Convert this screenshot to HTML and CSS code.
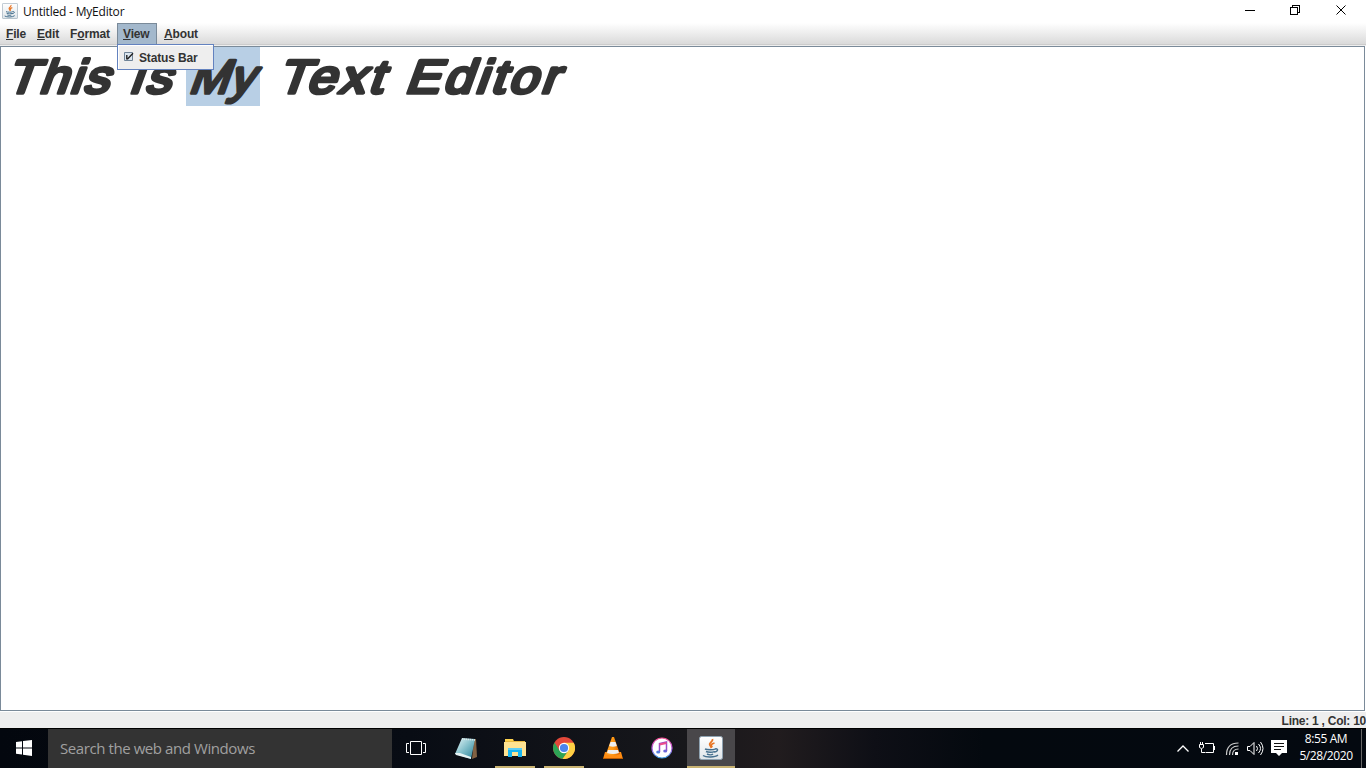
FILE: index.html
```html
<!DOCTYPE html>
<html lang="en">
<head>
<meta charset="utf-8">
<title>Untitled - MyEditor</title>
<link rel="stylesheet" href="styles.css">
</head>
<body>
<svg class="defs" aria-hidden="true">
  <defs>
    <linearGradient id="tile" x2="0" y2="1"><stop stop-color="#fff"/><stop offset="1" stop-color="#dfe5e9"/></linearGradient>
    <linearGradient id="note" x2="1" y2="1"><stop stop-color="#e9f8fa"/><stop offset=".5" stop-color="#82bfca"/><stop offset="1" stop-color="#267f96"/></linearGradient>
    <linearGradient id="ring" x2="0" y2="1"><stop stop-color="#f44f93"/><stop offset=".5" stop-color="#b95ce0"/><stop offset="1" stop-color="#41a7ee"/></linearGradient>
    <linearGradient id="cone" x2="1"><stop stop-color="#ffa22d"/><stop offset=".5" stop-color="#ff9914"/><stop offset="1" stop-color="#d76000"/></linearGradient>
    <symbol id="java" viewBox="0 0 24 24">
      <rect x=".5" y=".5" width="23" height="23" rx="2" fill="url(#tile)" stroke="#8fa3b2"/>
      <path d="M13.500 3c1 3-5 4-2 7l1 2M15.500 7c-4 1-4 3-2 4" fill="none" stroke="#e87524" stroke-width="1.800"/>
      <path d="M6 13c2 1 9 1 10 0M7 15.500c2 1 7 1 8 0M8 18c2 1 5 1 6 0M16 13c4-1 3 3-1 3M4 19.500c3 2 12 2 15-.5" fill="none" stroke="#46708e" stroke-width="1.500"/>
    </symbol>
  </defs>
</svg>
<div class="desktop">
  <header class="titlebar">
    <svg class="app-icon"><use href="#java"/></svg>
    <span class="title">Untitled - MyEditor</span>
    <svg class="window-buttons" width="110" height="22" viewBox="0 0 110 22" fill="none" stroke="#000" shape-rendering="crispEdges">
      <path d="M4 10.500h10M49.500 7.500h7v7h-7zM51.500 7v-1.500h7v7h-2"/>
      <path d="M95.500 5.500l9 9M104.500 5.500l-9 9" shape-rendering="auto"/>
    </svg>
  </header>
  <nav class="menubar">
    <span class="menu file"><u>F</u>ile</span>
    <span class="menu edit"><u>E</u>dit</span>
    <span class="menu format">F<u>o</u>rmat</span>
    <span class="menu view"><u>V</u>iew
      <span class="popup">
        <svg width="10" height="10" viewBox="0 0 10 10"><path d="M.5.500h8v8h-8z" fill="#dbe6ef" stroke="#6f8397"/><path d="M2.800 3v4.500M3.300 7.200L9 1.200" fill="none" stroke="#222" stroke-width="1.400"/></svg>
        <span>Status Bar</span>
      </span>
    </span>
    <span class="menu about"><u>A</u>bout</span>
  </nav>
  <main class="editor">
    <svg class="document" width="600" height="60" viewBox="0 47 600 60">
      <rect x="186" y="47" width="74" height="59" fill="#b8cfe5"/>
      <g class="words">
        <text transform="translate(5 93.300) skewX(-20) scale(1.080 1)" textLength="95">This</text>
        <text transform="translate(129 93.300) skewX(-20) scale(1.080 1)" textLength="37.500">is</text>
        <text transform="translate(188 93.300) skewX(-20) scale(1 1)" textLength="64">My</text>
        <text transform="translate(276 93.300) skewX(-20) scale(1.100 1)" textLength="96">Text</text>
        <text transform="translate(404 93.300) skewX(-20) scale(1.100 1)" textLength="139">Editor</text>
      </g>
    </svg>
  </main>
  <div class="statusbar">Line: 1 , Col: 10</div>
  <footer class="taskbar">
    <span class="start"><svg width="16" height="16" viewBox="0 0 16 16" fill="#fff"><path d="M0 2l6-.8v6.300H0zM7 1l9-1v7.500H7zM0 8.500h6v6L0 13.700zM7 8.500h9V16l-9-1.200z"/></svg></span>
    <span class="search">Search the web and Windows</span>
    <span class="task taskview"><svg width="20" height="15" viewBox="0 0 20 15" fill="none" stroke="#fff"><path d="M4.500.500h11v13h-11zM3 2.500H.500v9H3M17 2.500h2.500v9H17"/></svg></span>
    <span class="task"><svg width="24" height="24" viewBox="0 0 24 24"><path d="M20 3l2 0 1 18-5 2z" fill="#806143"/><path d="M8 2l13 1-4 20L1 18z" fill="url(#note)"/><path d="M1 17l5 0 11 4 0 2L2 19z" fill="#e5f2f3"/><path d="M8 3l13 1" stroke="#dce7e8" stroke-width="1.500" stroke-dasharray="1.200 .8"/></svg></span>
    <span class="task open"><svg width="22" height="22" viewBox="0 0 22 22"><path d="M1 2h8l1 2h11v15H1z" fill="#e8b83e"/><path d="M0 5h22v14H0z" fill="#ffe391"/><path d="M1 2h8v2H1z" fill="#ffd34e"/><path d="M4 11h14v9h-4v-5H8v5H4z" fill="#18b5ef"/><path d="M4 11h14v2H4z" fill="#5ccdf4"/></svg></span>
    <span class="task open"><svg width="22" height="22" viewBox="-11 -11 22 22"><circle r="11" fill="#e3483a"/><path d="M-9.500-5.500A11 11 0 0 0-1.500 10.900L4.500 2.500-4.500 2.500z" fill="#2da455"/><path d="M0-5.200h9.700A11 11 0 0 1-1.500 10.900L4.500 2.600z" fill="#ffd044"/><circle r="5.200" fill="#fff"/><circle r="4.100" fill="#4a85ec"/></svg></span>
    <span class="task"><svg width="20" height="22" viewBox="0 0 20 22"><path d="M2 15h16l2 7H0z" fill="#ff8c12"/><path d="M9 0h2l6 17q-7 3-14 0z" fill="url(#cone)"/><path d="M7.500 5h5l1.300 4q-4 1.500-7.600 0zM5 13h10l1 3q-6 2-12 0z" fill="#eee"/><path d="M0 21h20v1H0z" fill="#bb5a00"/></svg></span>
    <span class="task"><svg width="22" height="22" viewBox="0 0 22 22"><circle cx="11" cy="11" r="10" fill="#fff" stroke="url(#ring)" stroke-width="1.200"/><path d="M8.500 15V6.500l7-1.500v9" fill="none" stroke="#9a4cc7" stroke-width="1.500"/><path d="M8.500 7.500l7-1.500" stroke="#ed4d8c" stroke-width="2"/><ellipse cx="7.200" cy="15" rx="2" ry="1.600" fill="#557fe0"/><ellipse cx="14.200" cy="14" rx="2" ry="1.600" fill="#6c65d9"/></svg></span>
    <span class="task open active"><svg width="24" height="24"><use href="#java"/></svg></span>
    <svg class="tray" width="120" height="40" viewBox="1172 728 120 40" fill="none" stroke="#fff">
      <path d="M1177.500 751.500l5.500-5.500 5.500 5.500" stroke-width="1.300"/>
      <path d="M1205 743.500h8.500v9H1206M1214.500 746v4M1199.500 744.500h4v3q-2 2-4 0zM1200.500 744v-2M1202.500 744v-2M1201.500 749v3.500h4"/>
      <path d="M1226.500 755q0-12 12-12M1229.500 755q0-9 9-9M1232.500 755q0-6 6-6" stroke="#ccc" stroke-width="1.200"/><path d="M1235 752h3v3h-3z" fill="#fff" stroke="none"/>
      <path d="M1247.500 746.500h2.500l4-4v12l-4-4h-2.500zM1256.500 746q2 2.500 0 5M1258.500 744q4 4.500 0 9M1260.500 742q5 6.500 0 13"/>
      <path d="M1271 740h16v13h-5l-3 3-3-3h-5z" fill="#fff" stroke="none"/><path d="M1274 743.500h10M1274 746.500h10M1274 749.500h7" stroke="#111"/>
    </svg>
    <span class="clock"><span class="time">8:55 AM</span><span class="date">5/28/2020</span></span>
    <span class="show-desktop"></span>
  </footer>
</div>
</body>
</html>
```
FILE: styles.css
```css
* { box-sizing: border-box; }
body { margin: 0; overflow: hidden; background: #fff; }
.defs { position: absolute; width: 0; height: 0; }
.desktop { width: 1366px; height: 768px; display: flex; flex-direction: column; }
.titlebar { height: 23px; display: flex; align-items: center; padding-left: 2px; flex: none; }
.app-icon { width: 16px; height: 16px; margin: -1px 5px 0 0; }
.title { font: 12px/16px "Open Sans", sans-serif; letter-spacing: -.2px; color: #111; flex: 1; }
.window-buttons { margin: -1px 15px 0 0; }
.menubar { height: 23px; flex: none; display: flex; background: linear-gradient(#fff, #dadada 21px, #ccc 21px, #ccc 22px, #eee 22px); font: bold 12px/23px "Liberation Sans", Arial, sans-serif; letter-spacing: -.15px; color: #333; }
.menu { height: 22px; padding-left: 6px; white-space: nowrap; }
.menu u { text-underline-offset: 1px; text-decoration-thickness: 1px; }
.file { width: 31px; }
.edit { width: 33px; }
.format { width: 53px; }
.view { width: 40px; position: relative; background: #a3b8cc; border: 1px solid #7a8a99; border-bottom: 0; padding-left: 5px; line-height: 21px; }
.about { width: 50px; padding-left: 7px; }
.popup { position: absolute; z-index: 2; left: -1px; top: 20px; width: 97px; height: 26px; border: 1px solid #6382bf; background: #eee; box-shadow: inset 1px 1px #fff; display: flex; align-items: center; padding-left: 6px; gap: 5px; line-height: 25px; }
.popup svg { margin-bottom: 1px; }
.popup span { padding-top: 2px; }
.editor { width: 1365px; height: 665px; flex: none; border: 1px solid #7a8a99; background: #fff; display: flex; }
.document { margin-left: -1px; flex: none; }
.words { font-family: "Liberation Sans", Arial, sans-serif; font-size: 47px; fill: #333; stroke: #333; stroke-width: 3.7px; stroke-linejoin: round; }
.statusbar { height: 17px; flex: none; background: #eee; border-top: 1px solid #fff; text-align: right; color: #333; font: bold 12px/18px "Liberation Sans", Arial, sans-serif; letter-spacing: -.25px; white-space: nowrap; }
.taskbar { height: 40px; flex: none; display: flex; background: linear-gradient(90deg, #03070e, #080c14 30%, #17171b 50%, #211c1e 57%, #0e0f16 64%, #04090f 72%, #040910); border-top: 1px solid #000; }
.start { width: 48px; display: grid; place-items: center; padding-bottom: 2px; }
.search { width: 344px; background: #333; color: #a0a0a0; padding-left: 12px; font: 15px/38px "Open Sans", sans-serif; letter-spacing: -.42px; white-space: nowrap; }
.task { width: 47px; margin-right: 2px; display: grid; place-items: center; border-bottom: 2px solid transparent; }
.task svg { display: block; }
.taskview { width: 48px; padding-top: 2px; }
.open { width: 40px; margin: 0 5px 0 4px; border-color: #c9b372; }
.active { width: 48px; margin: 0; background: #49474a; }
.tray { margin: -1px 0 0 auto; }
.clock { width: 69px; display: flex; flex-direction: column; align-items: center; color: #fff; font: 12px/17px "Open Sans", sans-serif; letter-spacing: -.4px; padding: 1px 1px 0 0; }
.show-desktop { width: 5px; border-left: 1px solid #666; }
```
